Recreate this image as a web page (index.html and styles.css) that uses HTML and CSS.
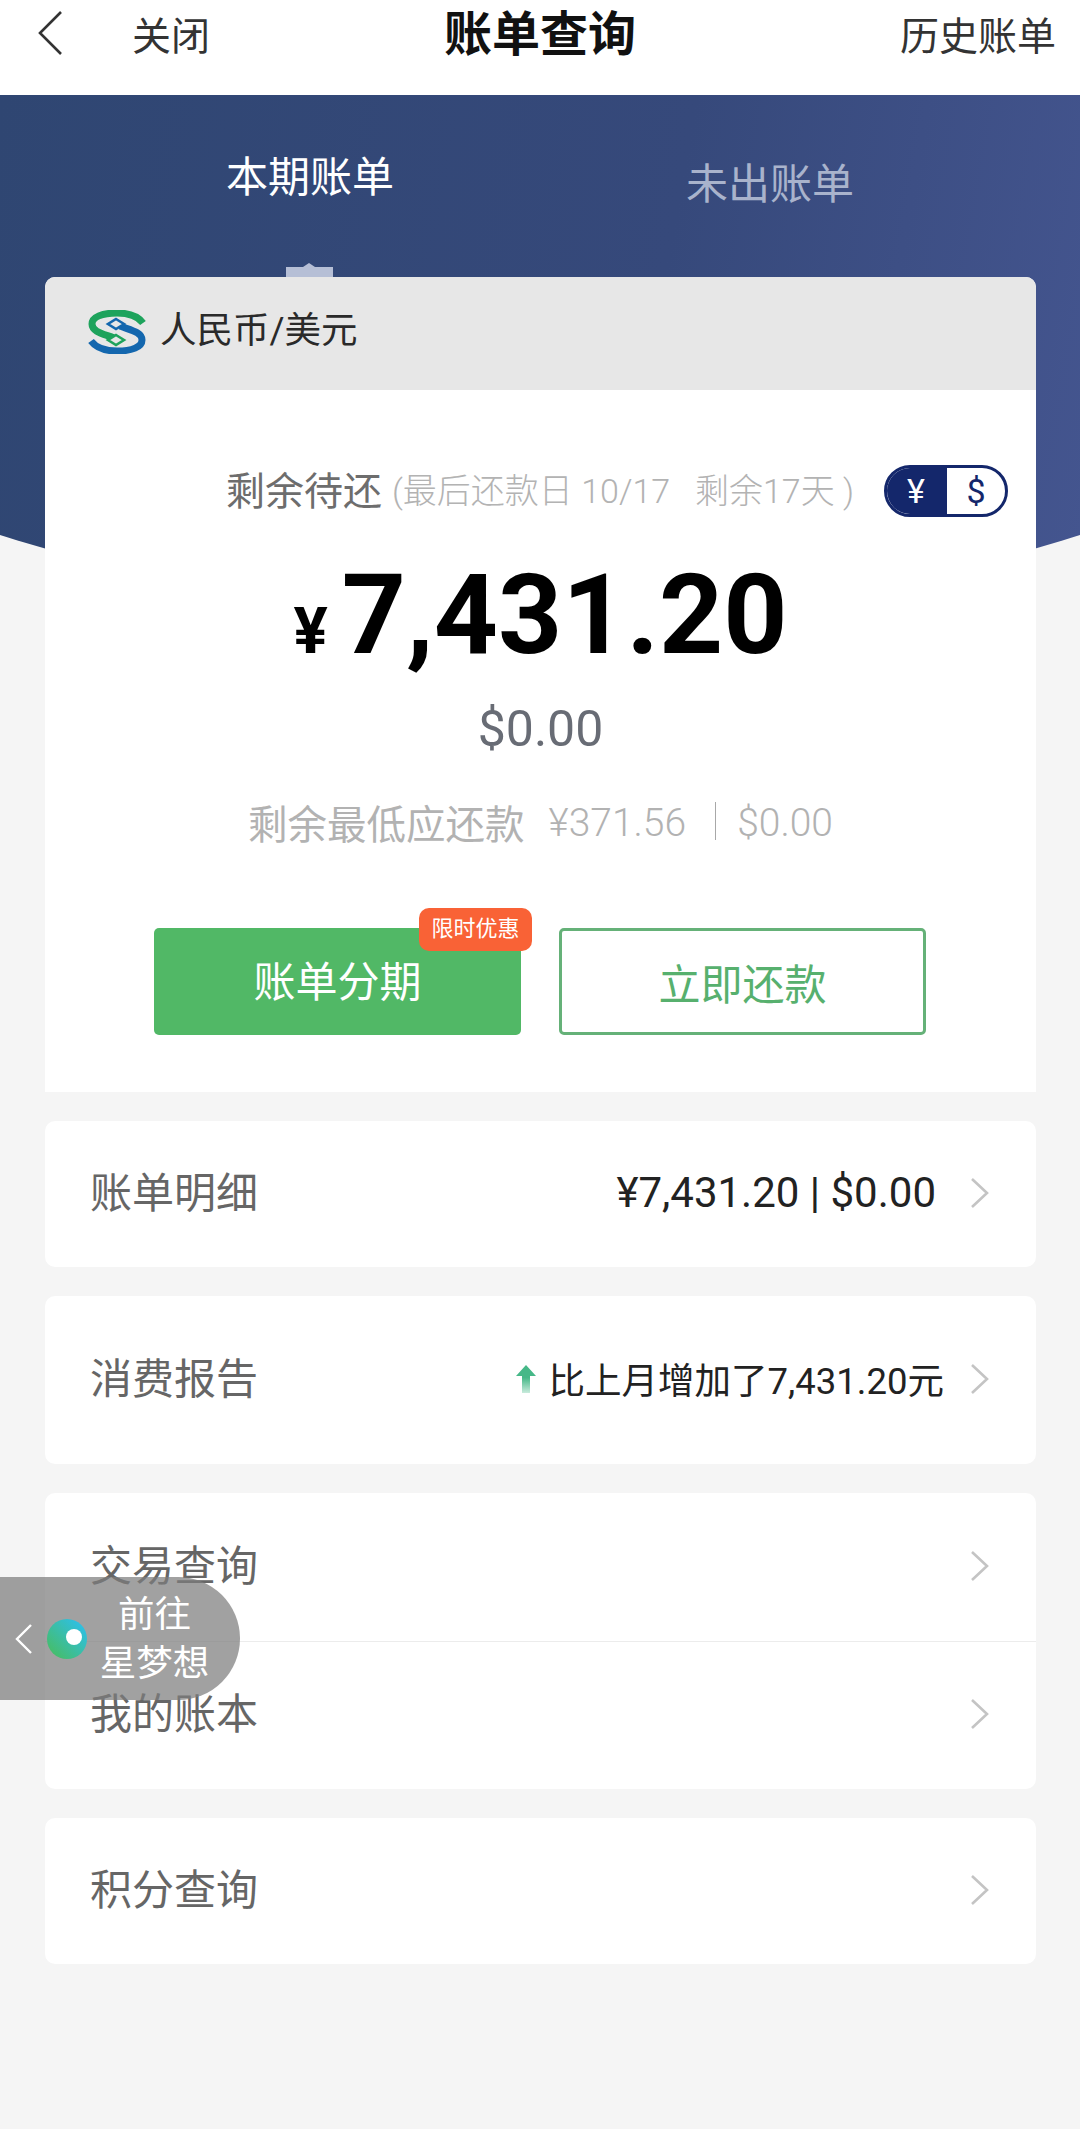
FILE: index.html
```html
<!DOCTYPE html>
<html lang="zh-CN">
<head>
    <meta charset="UTF-8">
    <meta name="viewport" content="width=device-width, initial-scale=1.0">
    <title>账单查询</title>
    <link rel="stylesheet" href="styles.css">
</head>
<body>

    <header class="topbar">
        <div class="topbar-left">
            <svg class="back-icon" width="28" height="46" viewBox="0 0 28 46"><path d="M25 2 L4 23 L25 44" fill="none" stroke="#333" stroke-width="2.6"/></svg>
            <span class="close-link">关闭</span>
        </div>
        <h1 class="page-title">账单查询</h1>
        <span class="history-link">历史账单</span>
    </header>

    <div class="hero">
        <div class="tabs">
            <div class="tab tab-active">本期账单</div>
            <div class="tab tab-next">未出账单</div>
        </div>
        <div class="tab-marker"></div>
    </div>

    <main class="content">
        <section class="bill-card">
            <div class="bill-head">
                <svg class="bank-logo" width="58" height="44" viewBox="0 0 58 44">
                    <path d="M55 13 C49 5 39 3 29 3 C14 3 4 7 4 14 C4 22 16 24 26 28" fill="none" stroke="#1ea35c" stroke-width="7"/>
                    <path d="M3 31 C9 39 19 41 29 41 C44 41 54 37 54 30 C54 22 42 20 32 16" fill="none" stroke="#1467ae" stroke-width="7"/>
                    <path d="M28 9 L36 14 L28 19 L20 14Z" fill="#e7e7e7" stroke="#1467ae" stroke-width="2.6"/>
                    <path d="M28 25 L36 30 L28 35 L20 30Z" fill="#e7e7e7" stroke="#1ea35c" stroke-width="2.6"/>
                </svg>
                <span class="bill-currency">人民币/美元</span>
            </div>
            <div class="bill-body">
                <div class="due-row">
                    <span class="due-label">剩余待还</span>
                    <span class="due-note">(最后还款日 10/17 &nbsp; 剩余17天 )</span>
                    <div class="currency-toggle">
                        <span class="toggle-on">¥</span>
                        <span class="toggle-off">$</span>
                    </div>
                </div>
                <div class="amount"><span class="amount-sign">¥</span>7,431.20</div>
                <div class="amount-usd">$0.00</div>
                <div class="min-pay">
                    <span class="min-label">剩余最低应还款</span>
                    <span class="min-value">¥371.56</span>
                    <span class="min-sep"></span>
                    <span class="min-value">$0.00</span>
                </div>
                <div class="actions">
                    <button class="btn btn-fill">账单分期<span class="promo-badge">限时优惠</span></button>
                    <button class="btn btn-line">立即还款</button>
                </div>
            </div>
        </section>

        <section class="list-card">
            <div class="list-row row-detail">
                <span class="row-label">账单明细</span>
                <span class="row-value">¥7,431.20 | $0.00</span>
                <svg class="chevron" width="20" height="32" viewBox="0 0 20 32"><path d="M2 2 L17 16 L2 30" fill="none" stroke="#c4c4c4" stroke-width="2.6"/></svg>
            </div>
        </section>

        <section class="list-card">
            <div class="list-row row-report">
                <span class="row-label">消费报告</span>
                <span class="row-value report-value">
                    <svg class="up-arrow" width="22" height="30" viewBox="0 0 22 30">
                        <defs><linearGradient id="arrowFade" x1="0" y1="0" x2="0" y2="1"><stop offset="0.45" stop-color="#46b888"/><stop offset="1" stop-color="#c9ebdc"/></linearGradient></defs>
                        <path d="M11 1 L21 12 L15 12 L15 29 L7 29 L7 12 L1 12Z" fill="url(#arrowFade)"/>
                    </svg>
                    比上月增加了7,431.20元
                </span>
                <svg class="chevron" width="20" height="32" viewBox="0 0 20 32"><path d="M2 2 L17 16 L2 30" fill="none" stroke="#c4c4c4" stroke-width="2.6"/></svg>
            </div>
        </section>

        <section class="list-card">
            <div class="list-row row-split">
                <span class="row-label">交易查询</span>
                <svg class="chevron" width="20" height="32" viewBox="0 0 20 32"><path d="M2 2 L17 16 L2 30" fill="none" stroke="#c4c4c4" stroke-width="2.6"/></svg>
            </div>
            <div class="list-row row-split row-border">
                <span class="row-label">我的账本</span>
                <svg class="chevron" width="20" height="32" viewBox="0 0 20 32"><path d="M2 2 L17 16 L2 30" fill="none" stroke="#c4c4c4" stroke-width="2.6"/></svg>
            </div>
        </section>

        <section class="list-card">
            <div class="list-row row-detail">
                <span class="row-label">积分查询</span>
                <svg class="chevron" width="20" height="32" viewBox="0 0 20 32"><path d="M2 2 L17 16 L2 30" fill="none" stroke="#c4c4c4" stroke-width="2.6"/></svg>
            </div>
        </section>
    </main>

    <div class="float-pill">
        <svg class="pill-arrow" width="18" height="32" viewBox="0 0 18 32"><path d="M16 2 L2 16 L16 30" fill="none" stroke="#fff" stroke-width="2.4"/></svg>
        <div class="pill-orb"></div>
        <div class="pill-text">前往<br>星梦想</div>
    </div>

</body>
</html>
```

FILE: styles.css
```css
* {
    box-sizing: border-box;
}
body {
    font-family: "Roboto", "Noto Sans CJK SC", sans-serif;
    margin: 0;
    padding: 0;
    width: 1080px;
    height: 2129px;
    overflow: hidden;
    background: #f5f5f5;
    position: relative;
}
.topbar {
    height: 95px;
    background: #fff;
    display: flex;
    align-items: center;
    justify-content: space-between;
    padding: 0 24px 30px 36px;
    position: relative;
    color: #333;
    font-size: 39px;
}
.topbar-left {
    display: flex;
    align-items: center;
    gap: 68px;
}
.back-icon {
    flex: none;
}
.page-title {
    position: absolute;
    left: 0;
    right: 0;
    top: 8px;
    margin: 0;
    text-align: center;
    font-size: 48px;
    line-height: 54px;
    font-weight: 700;
    color: #111;
}
.hero {
    height: 460px;
    position: relative;
    background: linear-gradient(100deg, #2f4672 0%, #36497b 60%, #44558f 100%);
    clip-path: circle(1800px at 540px -1277px);
}
.tabs {
    display: flex;
}
.tab {
    font-size: 42px;
    line-height: 48px;
}
.tab-active {
    color: #fff;
    margin: 59px 0 0 226px;
}
.tab-next {
    color: #a9b3cc;
    margin: 66px 0 0 292px;
}
.tab-marker {
    position: absolute;
    left: 286px;
    top: 172px;
    width: 47px;
    height: 11px;
    background: #b6bfd6;
}
.tab-marker::before {
    content: "";
    position: absolute;
    left: 17px;
    top: -4px;
    border-left: 6px solid transparent;
    border-right: 6px solid transparent;
    border-bottom: 4px solid #b6bfd6;
}
.content {
    position: absolute;
    left: 45px;
    top: 277px;
    width: 991px;
    display: flex;
    flex-direction: column;
    gap: 29px;
}
.bill-card {
    background: #fff;
    border-radius: 10px 10px 0 0;
    overflow: hidden;
}
.bill-head {
    height: 113px;
    background: #e7e7e7;
    display: flex;
    align-items: center;
    gap: 14px;
    padding: 0 0 4px 43px;
}
.bill-currency {
    font-size: 36.5px;
    color: #2a2a2a;
    margin-bottom: 8px;
}
.bill-body {
    height: 702px;
    padding-top: 75px;
    text-align: center;
}
.due-row {
    display: flex;
    align-items: center;
    height: 52px;
    padding: 0 28px 0 181px;
}
.due-label {
    font-size: 39px;
    color: #6d6d6d;
    margin-bottom: 6px;
}
.due-note {
    font-size: 34px;
    font-weight: 300;
    color: #b3b3b3;
    margin: 0 0 6px 10px;
}
.currency-toggle {
    display: flex;
    margin-left: auto;
    width: 124px;
    height: 52px;
    border: 3px solid #14276b;
    border-radius: 26px;
    overflow: hidden;
    font-size: 34px;
    line-height: 46px;
}
.toggle-on {
    width: 60px;
    padding-right: 2px;
    background: #14276b;
    color: #fff;
}
.toggle-off {
    flex: 1;
    color: #14276b;
}
.amount {
    font-size: 112px;
    line-height: 130px;
    font-weight: 700;
    color: #000;
    margin-top: 33px;
}
.amount-sign {
    font-size: 64px;
    margin-right: 14px;
}
.amount-usd {
    font-size: 50px;
    line-height: 60px;
    color: #686c75;
    margin-top: 2px;
}
.min-pay {
    display: flex;
    justify-content: center;
    align-items: center;
    height: 52px;
    margin-top: 36px;
    color: #b2b2b2;
}
.min-label {
    font-size: 39.5px;
}
.min-value {
    font-size: 39px;
    font-weight: 300;
    margin: 3px 0 0 24px;
}
.min-sep {
    width: 1px;
    height: 38px;
    background: #a8a8a8;
    margin-left: 29px;
    margin-right: -3px;
}
.actions {
    display: flex;
    gap: 38px;
    padding-left: 109px;
    margin-top: 81px;
}
.btn {
    position: relative;
    width: 367px;
    height: 107px;
    border-radius: 5px;
    font-family: inherit;
    font-size: 42px;
}
.btn-fill {
    background: #51b866;
    border: none;
    color: #fff;
    padding-bottom: 8px;
}
.btn-line {
    background: #fff;
    border: 3px solid #65b178;
    color: #57b06e;
}
.promo-badge {
    position: absolute;
    right: -11px;
    top: -20px;
    width: 113px;
    height: 43px;
    border-radius: 10px;
    background: #f96236;
    color: #fff;
    font-size: 22px;
    line-height: 41px;
    text-align: center;
}
.list-card {
    background: #fff;
    border-radius: 10px;
}
.list-row {
    display: flex;
    align-items: center;
    padding: 0 46px 3px 45px;
    font-size: 42px;
}
.row-detail {
    height: 146px;
}
.row-report {
    height: 168px;
}
.row-split {
    height: 148px;
}
.row-border {
    border-top: 1px solid #ececec;
}
.row-label {
    color: #666;
    flex: 1;
    margin-bottom: 7px;
}
.row-value {
    color: #222;
    margin-right: 34px;
}
.report-value {
    font-size: 36.5px;
    margin-right: 26px;
    display: flex;
    align-items: center;
    gap: 12px;
}
.chevron {
    flex: none;
}
.float-pill {
    position: absolute;
    left: 0;
    top: 1577px;
    width: 240px;
    height: 123px;
    border-radius: 0 62px 62px 0;
    background: rgba(125, 125, 125, 0.72);
    display: flex;
    align-items: center;
    padding-left: 15px;
}
.pill-arrow {
    flex: none;
}
.pill-orb {
    position: relative;
    flex: none;
    width: 40px;
    height: 40px;
    margin-left: 14px;
    border-radius: 50%;
    background: linear-gradient(45deg, #45bd6e 15%, #2fbfe0 85%);
}
.pill-orb::after {
    content: "";
    position: absolute;
    left: 19px;
    top: 10px;
    width: 16px;
    height: 16px;
    border-radius: 50%;
    background: #fff;
}
.pill-text {
    flex: 1;
    color: #fff;
    font-size: 36.5px;
    line-height: 49px;
    text-align: center;
    padding-right: 18px;
}
```
